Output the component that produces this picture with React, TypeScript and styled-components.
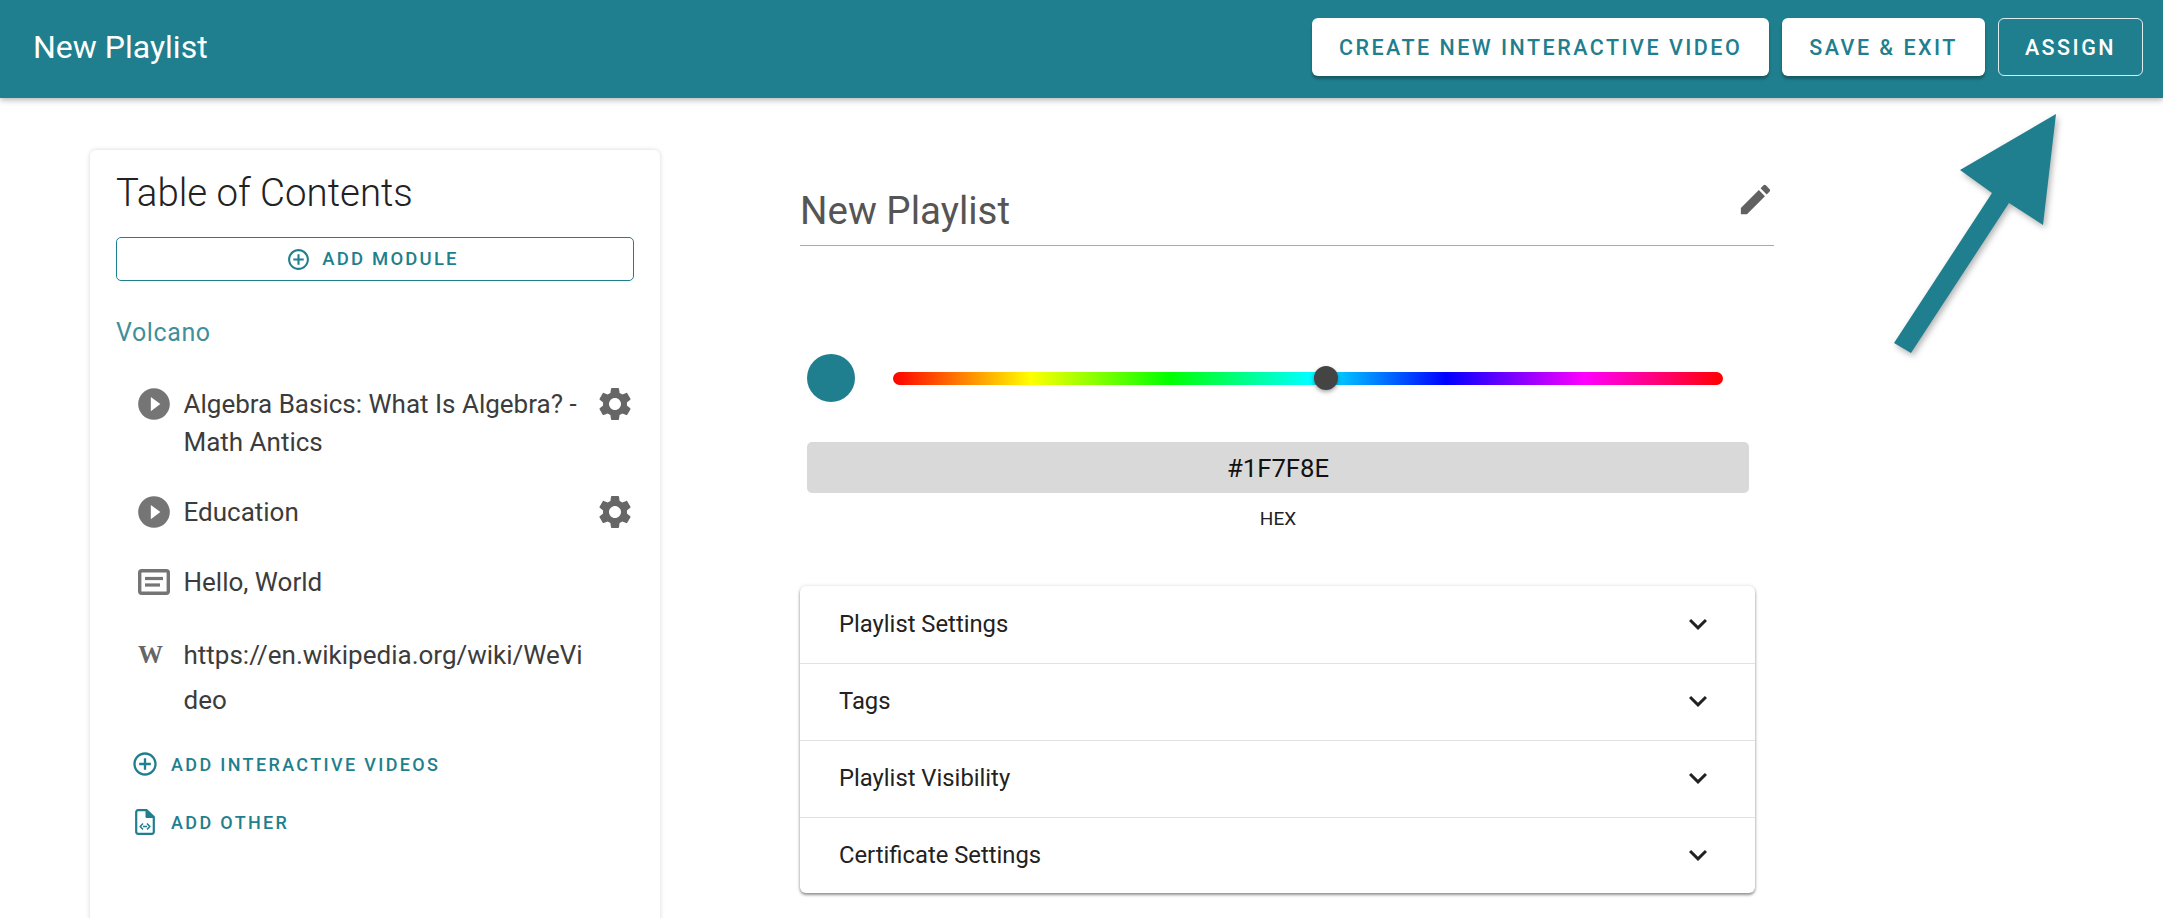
import React from "react";
import styled, { createGlobalStyle } from "styled-components";

const TEAL = "#1f7f8e";

const GlobalStyle = createGlobalStyle`
  html, body {
    margin: 0;
    height: 100%;
    background: #fff;
    overflow: hidden;
    font-family: Roboto, "Liberation Sans", sans-serif;
  }
`;

const Page = styled.div`
  position: relative;
  width: 2163px;
  height: 918px;
  overflow: hidden;
`;

const Header = styled.header`
  height: 98px;
  background: ${TEAL};
  display: flex;
  align-items: center;
  justify-content: space-between;
  padding: 0 20px 4px 33px;
  box-sizing: border-box;
  box-shadow: 0 2px 6px rgba(0, 0, 0, 0.3);
  position: relative;
`;

const HeaderTitle = styled.div`
  color: #fff;
  font-size: 32px;
  font-weight: 400;
`;

const HeaderActions = styled.div`
  display: flex;
  gap: 13px;
`;

const HeaderButton = styled.button<{ $outlined?: boolean }>`
  height: 58px;
  padding: 0 ${(p) => (p.$outlined ? "26px" : "27px")};
  box-sizing: border-box;
  border-radius: 6px;
  border: ${(p) => (p.$outlined ? "1.5px solid rgba(255,255,255,0.85)" : "none")};
  background: ${(p) => (p.$outlined ? "transparent" : "#fff")};
  color: ${(p) => (p.$outlined ? "#fff" : TEAL)};
  box-shadow: ${(p) => (p.$outlined ? "none" : "0 3px 3px rgba(0,0,0,0.3)")};
  font-family: inherit;
  font-size: 21.5px;
  font-weight: 500;
  letter-spacing: 2.47px;
`;

const Body = styled.main`
  display: flex;
  align-items: flex-start;
  padding: 52px 0 0 90px;
`;

const Card = styled.section`
  width: 570px;
  height: 900px;
  flex: none;
  box-sizing: border-box;
  padding: 18px 26px 0;
  border-radius: 6px;
  box-shadow: 0 0 5px rgba(0, 0, 0, 0.16);
`;

const CardTitle = styled.h2`
  margin: 0;
  font-size: 38.4px;
  line-height: 50px;
  font-weight: 300;
  color: #222;
`;

const AddModule = styled.button`
  width: 100%;
  height: 44px;
  margin-top: 19px;
  padding: 0 5px 0 0;
  display: flex;
  align-items: center;
  justify-content: center;
  gap: 11px;
  background: #fff;
  border: 1.5px solid ${TEAL};
  border-radius: 5px;
  color: ${TEAL};
  font-family: inherit;
  font-size: 18.5px;
  font-weight: 500;
  letter-spacing: 2.2px;
`;

const ModuleName = styled.div`
  margin-top: 34px;
  font-size: 25px;
  line-height: 36px;
  color: #3f8f9c;
  letter-spacing: 0.6px;
`;

const ItemList = styled.div`
  margin-top: 34px;
  padding-left: 22px;
  display: flex;
  flex-direction: column;
  gap: 32px;
`;

const Item = styled.div`
  display: flex;
  align-items: flex-start;
`;

const ItemIcon = styled.div`
  width: 32px;
  height: 38px;
  flex: none;
  display: flex;
  align-items: center;
  justify-content: center;
  margin-right: 13.5px;
  color: #757575;
`;

const ItemText = styled.div<{ $wide?: boolean }>`
  width: 406px;
  flex: none;
  font-size: 26px;
  line-height: ${(p) => (p.$wide ? "45px" : "38px")};
  color: #3c3c3c;
  word-break: ${(p) => (p.$wide ? "break-all" : "normal")};
`;

const WikiGlyph = styled.div`
  width: 32px;
  height: 38px;
  padding-top: 3px;
  box-sizing: border-box;
  font-family: "Liberation Serif", serif;
  font-size: 25px;
  line-height: 38px;
  font-weight: 700;
  color: #666;
`;

const GearButton = styled.div`
  margin-left: 5.5px;
  height: 38px;
  display: flex;
  align-items: center;
  color: #666;
`;

const ItemSvg = styled.svg`
  flex: none;
`;

const ActionList = styled.div`
  margin-top: 26px;
  padding-left: 15px;
  display: flex;
  flex-direction: column;
  gap: 28px;
`;

const Action = styled.div`
  display: flex;
  align-items: center;
  height: 30px;
  gap: 12px;
  color: ${TEAL};
  font-size: 18px;
  font-weight: 500;
  letter-spacing: 2.35px;
`;

const ActionIcon = styled.div`
  width: 28px;
  height: 28px;
  display: flex;
  align-items: center;
  justify-content: center;
`;

const Editor = styled.div`
  width: 960px;
  margin-left: 139px;
`;

const TitleRow = styled.div`
  height: 66px;
  margin: 30px -15px 0 1px;
  box-sizing: border-box;
  border-bottom: 1.5px solid #aaa;
  display: flex;
  justify-content: space-between;
`;

const PlaylistName = styled.div`
  font-size: 38.5px;
  line-height: 62px;
  font-weight: 400;
  color: #555;
`;

const EditIcon = styled.svg`
  width: 39px;
  height: 39px;
  margin-right: -1px;
  color: #616161;
`;

const ColorRow = styled.div`
  margin: 108px 0 0 8px;
  display: flex;
  align-items: center;
`;

const Swatch = styled.div`
  width: 48px;
  height: 48px;
  border-radius: 50%;
  background: ${TEAL};
`;

const HueTrack = styled.div`
  position: relative;
  width: 830px;
  height: 13px;
  margin-left: 38px;
  border-radius: 7px;
  background: linear-gradient(
    to right,
    #f00 0%,
    #ff0 16.6%,
    #0f0 33.3%,
    #0ff 50%,
    #00f 66.6%,
    #f0f 83.3%,
    #f00 100%
  );
`;

const HueThumb = styled.div`
  position: absolute;
  left: 52.2%;
  top: 50%;
  width: 24px;
  height: 24px;
  margin: -12px 0 0 -12px;
  border-radius: 50%;
  background: #444;
  box-shadow: 0 2px 4px rgba(0, 0, 0, 0.35);
`;

const HexBox = styled.div`
  width: 942px;
  height: 51px;
  margin: 40px 0 0 8px;
  display: flex;
  align-items: center;
  justify-content: center;
  border-radius: 5px;
  background: #d9d9d9;
  color: #111;
  font-size: 25.7px;
`;

const HexLabel = styled.div`
  width: 942px;
  margin: 14px 0 0 8px;
  text-align: center;
  font-size: 19px;
  line-height: 24px;
  color: #222;
`;

const Accordion = styled.div`
  width: 955px;
  margin: 55px 0 0 1px;
  border-radius: 6px;
  box-shadow: 0 2px 3px rgba(0, 0, 0, 0.4), 0 0 4px rgba(0, 0, 0, 0.12);
  background: #fff;
`;

const AccordionRow = styled.div`
  height: 77px;
  box-sizing: border-box;
  padding: 0 39px 1px;
  display: flex;
  align-items: center;
  justify-content: space-between;
  font-size: 23.8px;
  color: #222;
  & + & {
    border-top: 1.5px solid #e2e2e2;
    padding-bottom: 3px;
  }
  &:last-child {
    height: 76px;
    padding-bottom: 1px;
  }
`;

const Chevron = styled.svg`
  width: 36px;
  height: 36px;
  color: #222;
`;

const Arrow = styled.svg`
  position: absolute;
  left: 1880px;
  top: 105px;
  filter: drop-shadow(2px 3px 3px rgba(0, 0, 0, 0.3));
`;

const PlayIcon = () => (
  <ItemSvg width="38" height="38" viewBox="0 0 24 24" fill="currentColor">
    <path d="M12 2C6.48 2 2 6.48 2 12s4.48 10 10 10 10-4.48 10-10S17.52 2 12 2zm-2 14.5v-9l6 4.5-6 4.5z" />
  </ItemSvg>
);

const GearIcon = () => (
  <ItemSvg width="40" height="40" viewBox="0 0 24 24" fill="currentColor">
    <path d="M19.14,12.94c0.04-0.3,0.06-0.61,0.06-0.94c0-0.32-0.02-0.64-0.07-0.94l2.03-1.58c0.18-0.14,0.23-0.41,0.12-0.61 l-1.92-3.32c-0.12-0.22-0.37-0.29-0.59-0.22l-2.39,0.96c-0.5-0.38-1.03-0.7-1.62-0.94L14.4,2.81c-0.04-0.24-0.24-0.41-0.48-0.41 h-3.84c-0.24,0-0.43,0.17-0.47,0.41L9.25,5.35C8.66,5.59,8.12,5.92,7.63,6.29L5.24,5.33c-0.22-0.08-0.47,0-0.59,0.22L2.74,8.87 C2.62,9.08,2.66,9.34,2.86,9.48l2.03,1.58C4.84,11.36,4.8,11.69,4.8,12s0.02,0.64,0.07,0.94l-2.03,1.58 c-0.18,0.14-0.23,0.41-0.12,0.61l1.92,3.32c0.12,0.22,0.37,0.29,0.59,0.22l2.39-0.96c0.5,0.38,1.03,0.7,1.62,0.94l0.36,2.54 c0.05,0.24,0.24,0.41,0.48,0.41h3.84c0.24,0,0.44-0.17,0.47-0.41l0.36-2.54c0.59-0.24,1.13-0.56,1.62-0.94l2.39,0.96 c0.22,0.08,0.47,0,0.59-0.22l1.92-3.32c0.12-0.22,0.07-0.47-0.12-0.61L19.14,12.94z M12,15.6c-1.98,0-3.6-1.62-3.6-3.6 s1.62-3.6,3.6-3.6s3.6,1.62,3.6,3.6S13.98,15.6,12,15.6z" />
  </ItemSvg>
);

const TextIcon = () => (
  <svg width="32" height="26" viewBox="0 0 32 26" fill="none" stroke="currentColor">
    <rect x="1.700" y="1.700" width="28.600" height="22.600" rx="2" strokeWidth="3.400" />
    <path d="M7 9.500h18" strokeWidth="3.200" />
    <path d="M7 16h15" strokeWidth="3.200" />
  </svg>
);

const PlusCircle = ({ size }: { size: number }) => (
  <svg width={size} height={size} viewBox="0 0 24 24" fill="currentColor">
    <path d="M13 7h-2v4H7v2h4v4h2v-4h4v-2h-4V7zm-1-5C6.48 2 2 6.48 2 12s4.480 10 10 10 10-4.480 10-10S17.520 2 12 2zm0 18c-4.410 0-8-3.590-8-8s3.590-8 8-8 8 3.590 8 8-3.590 8-8 8z" />
  </svg>
);

const FileCodeIcon = () => (
  <svg width="20" height="26" viewBox="0 0 20 26" fill="none" stroke="currentColor">
    <path d="M3 1.200h8.500L18.800 8v15a1.800 1.800 0 0 1-1.800 1.800H3A1.800 1.800 0 0 1 1.200 23V3A1.800 1.800 0 0 1 3 1.200z" strokeWidth="2.200" />
    <path d="M11 1.500V8.500h7.500z" fill="currentColor" strokeWidth="1" />
    <path d="M8 14.500l-2.800 3 2.800 3M12 14.500l2.800 3-2.800 3M8 17.500h4" strokeWidth="1.500" />
  </svg>
);

const settings = [
  "Playlist Settings",
  "Tags",
  "Playlist Visibility",
  "Certificate Settings",
];

const App = () => {
  return (
    <Page>
      <GlobalStyle />
      <Header>
        <HeaderTitle>New Playlist</HeaderTitle>
        <HeaderActions>
          <HeaderButton>CREATE NEW INTERACTIVE VIDEO</HeaderButton>
          <HeaderButton>SAVE &amp; EXIT</HeaderButton>
          <HeaderButton $outlined>ASSIGN</HeaderButton>
        </HeaderActions>
      </Header>
      <Body>
        <Card>
          <CardTitle>Table of Contents</CardTitle>
          <AddModule>
            <PlusCircle size={25} />
            ADD MODULE
          </AddModule>
          <ModuleName>Volcano</ModuleName>
          <ItemList>
            <Item>
              <ItemIcon>
                <PlayIcon />
              </ItemIcon>
              <ItemText>Algebra Basics: What Is Algebra? - Math Antics</ItemText>
              <GearButton>
                <GearIcon />
              </GearButton>
            </Item>
            <Item>
              <ItemIcon>
                <PlayIcon />
              </ItemIcon>
              <ItemText>Education</ItemText>
              <GearButton>
                <GearIcon />
              </GearButton>
            </Item>
            <Item>
              <ItemIcon>
                <TextIcon />
              </ItemIcon>
              <ItemText>Hello, World</ItemText>
            </Item>
            <Item>
              <ItemIcon>
                <WikiGlyph>W</WikiGlyph>
              </ItemIcon>
              <ItemText $wide>https://en.wikipedia.org/wiki/WeVideo</ItemText>
            </Item>
          </ItemList>
          <ActionList>
            <Action>
              <ActionIcon>
                <PlusCircle size={28} />
              </ActionIcon>
              ADD INTERACTIVE VIDEOS
            </Action>
            <Action>
              <ActionIcon>
                <FileCodeIcon />
              </ActionIcon>
              ADD OTHER
            </Action>
          </ActionList>
        </Card>
        <Editor>
          <TitleRow>
            <PlaylistName>New Playlist</PlaylistName>
            <EditIcon viewBox="0 0 24 24" fill="currentColor">
              <path d="M3 17.250V21h3.750L17.810 9.940l-3.750-3.750L3 17.250zM20.710 7.040c.39-.39.39-1.020 0-1.410l-2.340-2.340a.9959.9959 0 0 0-1.410 0l-1.830 1.830 3.750 3.750 1.830-1.830z" />
            </EditIcon>
          </TitleRow>
          <ColorRow>
            <Swatch />
            <HueTrack>
              <HueThumb />
            </HueTrack>
          </ColorRow>
          <HexBox>#1F7F8E</HexBox>
          <HexLabel>HEX</HexLabel>
          <Accordion>
            {settings.map((label) => (
              <AccordionRow key={label}>
                {label}
                <Chevron viewBox="0 0 24 24" fill="currentColor">
                  <path d="M16.590 8.590 12 13.170 7.410 8.590 6 10l6 6 6-6z" />
                </Chevron>
              </AccordionRow>
            ))}
          </Accordion>
        </Editor>
      </Body>
      <Arrow width="190" height="260" viewBox="1880 105 190 260" fill={TEAL}>
        <polygon points="2056,114 2043,225 2009,203 1911,353 1894,343 1992,193 1960,170" />
      </Arrow>
    </Page>
  );
};

export default App;
